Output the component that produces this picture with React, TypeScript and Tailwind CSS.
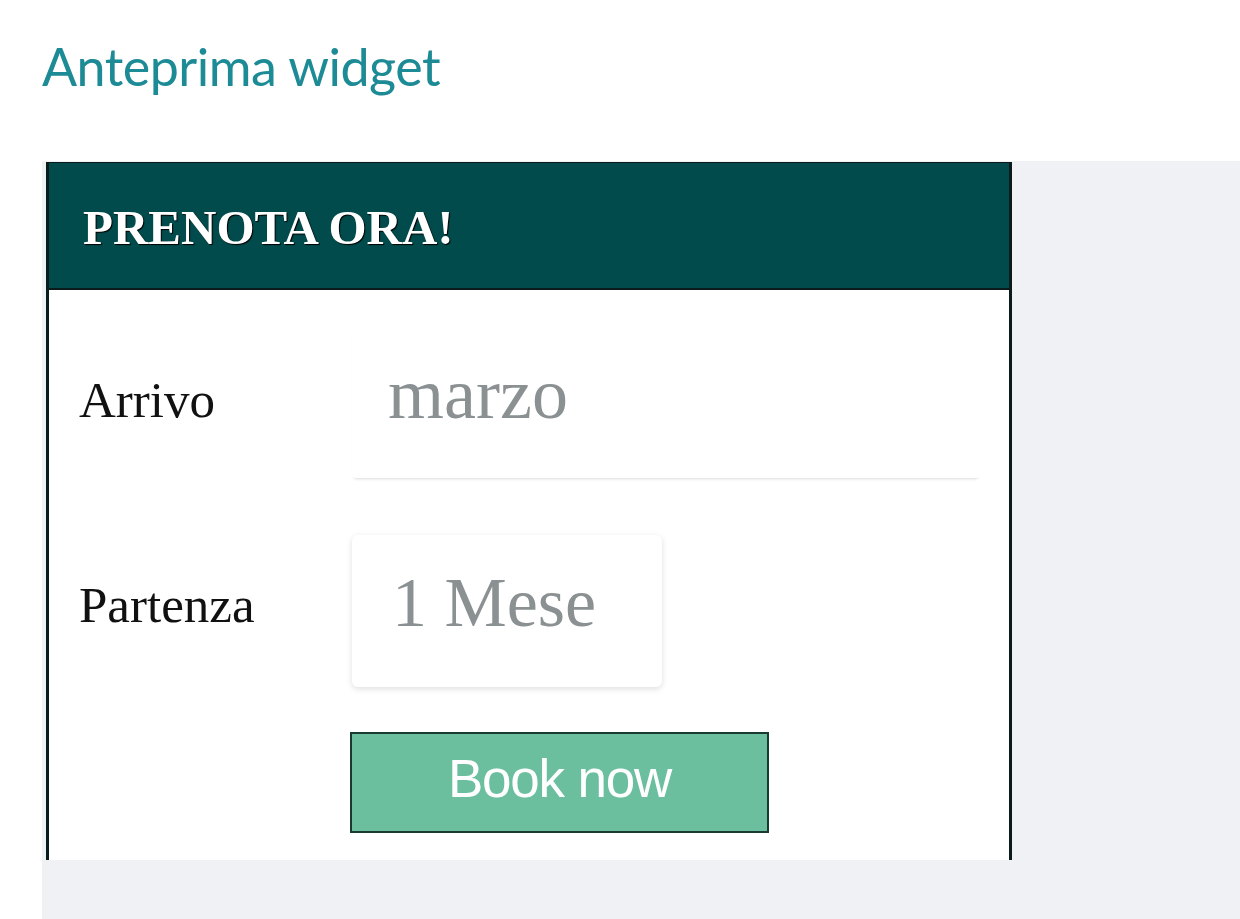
export default function App() {
  return (
    <div className="h-[919px] w-full bg-white flex flex-col pl-[42px] overflow-hidden">
      {/* Page title */}
      <h1 className="h-[161px] pt-[34px] text-[52px] leading-[64px] tracking-[-0.5px] text-[#1d8b96] font-['Lato',sans-serif] font-normal">
        Anteprima widget
      </h1>

      {/* Preview area */}
      <div className="flex-1 bg-[#eff1f5] pl-[4px] pt-[1px]">
        <div className="w-[966px] h-[698px] bg-white border-x-[3px] border-t border-[#0b1a1a] flex flex-col font-['Liberation_Serif',serif]">
          {/* Header */}
          <div className="h-[127px] shrink-0 bg-[#024b4c] border-b-2 border-[#0b1a1a] flex items-center pl-[34px] pt-[4px]">
            <span className="text-[49px] font-bold text-white [text-shadow:1px_1px_1px_#000]">
              PRENOTA ORA!
            </span>
          </div>

          {/* Body */}
          <div className="flex flex-col pl-[30px] pt-[36px]">
            <div className="flex items-center h-[152px]">
              <span className="w-[273px] text-[51px] text-[#111] pb-[4px]">Arrivo</span>
              <div className="w-[628px] h-[152px] flex items-center pl-[36px] pb-[16px] rounded-sm shadow-[0_3px_3px_-2px_rgba(0,0,0,0.14)]">
                <span className="text-[72px] text-[#8b9192]">marzo</span>
              </div>
            </div>

            <div className="flex items-center h-[152px] mt-[57px]">
              <span className="w-[273px] text-[51px] text-[#111] pb-[12px]">Partenza</span>
              <div className="w-[310px] h-[152px] flex items-center pl-[40px] pb-[18px] rounded-md shadow-[0_2px_6px_rgba(0,0,0,0.13)]">
                <span className="text-[70px] text-[#8b9192]">1 Mese</span>
              </div>
            </div>

            <button className="mt-[45px] ml-[271px] w-[419px] h-[101px] bg-[#6bbf9f] border-2 border-[#183a31] text-white text-[53px] tracking-[-1.2px] font-['Liberation_Sans',sans-serif] flex items-center justify-center pb-[8px]">
              Book now
            </button>
          </div>
        </div>
      </div>
    </div>
  );
}
